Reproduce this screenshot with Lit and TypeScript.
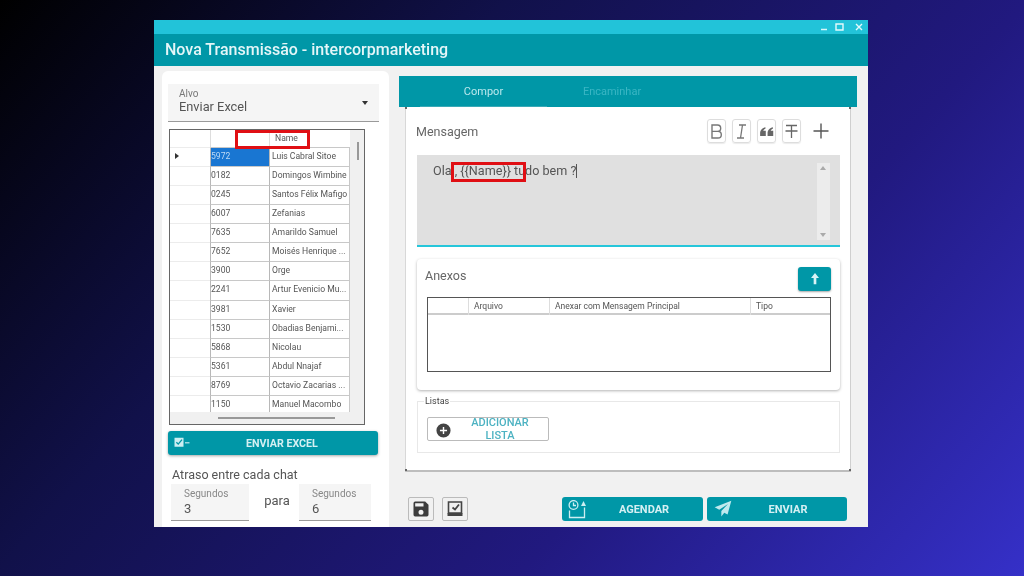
import { LitElement, html, css, svg } from 'lit';
import { customElement } from 'lit/decorators.js';

const ROWS = [
  ['5972', 'Luis Cabral Sitoe'],
  ['0182', 'Domingos Wimbine'],
  ['0245', 'Santos Félix Mafigo'],
  ['6007', 'Zefanias'],
  ['7635', 'Amarildo Samuel'],
  ['7652', 'Moisés Henrique ...'],
  ['3900', 'Orge'],
  ['2241', 'Artur Evenicio Mu...'],
  ['3981', 'Xavier'],
  ['1530', 'Obadias Benjami...'],
  ['5868', 'Nicolau'],
  ['5361', 'Abdul Nnajaf'],
  ['8769', 'Octavio Zacarias ...'],
  ['1150', 'Manuel Macombo'],
];

const icon = (size: number, color: string, body: unknown) => html`
  <svg width=${size} height=${size} viewBox="0 0 24 24" fill=${color}>${body}</svg>
`;

@customElement('app-root')
export class AppRoot extends LitElement {
  static styles = css`
    :host {
      display: block;
      width: 1024px;
      height: 576px;
      overflow: hidden;
      padding: 20px 0 0 154px;
      box-sizing: border-box;
      background: linear-gradient(131.6deg, #000 0%, #11114a 33%, #21197f 67%, #3530c8 100%);
      font-family: Roboto, 'Liberation Sans', sans-serif;
      color: #555;
    }
    .window {
      width: 714px;
      height: 507px;
      background: #f1f1f1;
      display: flex;
      flex-direction: column;
      filter: blur(0.45px);
    }
    .strip {
      height: 14px;
      background: #22c3d9;
      display: flex;
      justify-content: flex-end;
      align-items: center;
      gap: 11px;
      padding-right: 5px;
    }
    .strip .min {
      margin-right: -4px;
    }
    .title {
      height: 32px;
      background: #0097a7;
      color: #e4f6f8;
      font-size: 16px;
      font-weight: 500;
      line-height: 32px;
      padding-left: 11px;
    }
    .body {
      flex: 1;
      display: flex;
      min-height: 0;
    }

    .left {
      width: 227px;
      margin: 5px 0 0 8px;
      padding: 13px 0 0 6px;
      box-sizing: border-box;
      background: #fff;
      border-radius: 6px 6px 0 0;
    }
    .select {
      width: 211px;
      height: 38px;
      box-sizing: border-box;
      background: #f5f5f5;
      border-bottom: 1px solid #9a9a9a;
      padding: 4px 0 0 11px;
      position: relative;
    }
    .select small {
      display: block;
      font-size: 10px;
      line-height: 12px;
      color: #777;
    }
    .select span {
      display: block;
      font-size: 12.8px;
      line-height: 14px;
      color: #555;
    }
    .caret {
      position: absolute;
      right: 11px;
      top: 17px;
      border: 3.5px solid transparent;
      border-top: 4px solid #333;
      border-bottom: 0;
    }
    .grid {
      position: relative;
      width: 196px;
      height: 296px;
      margin: 7px 0 0 1px;
      box-sizing: border-box;
      border: 1.5px solid #666;
      background: #f0f0f0;
      overflow: hidden;
      font-size: 8.6px;
      color: #555;
    }
    .grid-row {
      display: grid;
      grid-template-columns: 40px 59px 81px;
      height: 19.15px;
      background: #fff;
      width: 180px;
    }
    .grid-row > div {
      box-sizing: border-box;
      line-height: 17.5px;
      white-space: nowrap;
      overflow: hidden;
      border-bottom: 1px solid #c8c8c8;
    }
    .grid-row .mark {
      border-bottom-color: #ececec;
      position: relative;
    }
    .grid-row .id {
      border-left: 1px solid #b8b8b8;
    }
    .grid-row .name {
      border-left: 1px solid #b8b8b8;
      border-right: 1px solid #c8c8c8;
      padding-left: 2px;
    }
    .grid-row.head {
      height: 17.5px;
    }
    .grid-row.head .name {
      padding-left: 5px;
      border-left-color: #ddd;
      border-right: 0;
    }
    .grid-row.head .id {
      border-left-color: #ddd;
    }
    .grid-row.selected .id {
      background: #1976d2;
      color: #bcd9f5;
    }
    .arrow {
      position: absolute;
      left: 5px;
      top: 5px;
      border: 3.5px solid transparent;
      border-left: 4px solid #333;
      border-right: 0;
    }
    .vbar {
      position: absolute;
      top: 12px;
      right: 5px;
      width: 2px;
      height: 18px;
      background: #999;
    }
    .hbar {
      position: absolute;
      left: 48px;
      bottom: 5px;
      width: 117px;
      height: 2px;
      background: #999;
    }
    .hfill {
      position: absolute;
      left: 0;
      right: 0;
      bottom: 0;
      height: 12px;
      background: #f0f0f0;
    }
    .mark-red {
      position: absolute;
      box-sizing: border-box;
      border: 3px solid #e00f14;
    }
    .grid .mark-red {
      left: 65px;
      top: 0;
      width: 75px;
      height: 19px;
    }
    .send-excel {
      width: 210px;
      height: 24px;
      margin-top: 6px;
      border-radius: 3px;
      background: #0097a7;
      box-shadow: 0 1px 3px rgba(0, 0, 0, 0.35);
      color: #d5f0f3;
      font-size: 10.7px;
      font-weight: 700;
      display: grid;
      grid-template-columns: 78px 1fr;
      align-items: center;
    }
    .send-excel svg {
      margin-left: 5px;
    }
    .delay {
      font-size: 12.5px;
      line-height: 14px;
      margin: 13px 0 0 4px;
      color: #555;
    }
    .delay-row {
      display: flex;
      margin: 2px 0 0 3px;
    }
    .num {
      height: 37px;
      box-sizing: border-box;
      background: #f5f5f5;
      border-bottom: 1px solid #9a9a9a;
      font-size: 10px;
      color: #888;
      padding: 4px 0 0 13px;
      line-height: 12px;
    }
    .num b {
      display: block;
      font-weight: 400;
      font-size: 13px;
      line-height: 17px;
      color: #555;
    }
    .num.a {
      width: 78px;
    }
    .num.b {
      width: 72px;
    }
    .para {
      width: 50px;
      box-sizing: border-box;
      text-align: center;
      font-size: 13px;
      padding: 9px 0 0 6px;
      color: #555;
    }

    .right {
      width: 458px;
      margin: 10px 0 0 10px;
      display: flex;
      flex-direction: column;
    }
    .tabs {
      height: 31px;
      flex: none;
      background: #0097a7;
      display: flex;
      padding-left: 21px;
      font-size: 11px;
      line-height: 31px;
      text-align: center;
    }
    .tab {
      width: 127px;
      box-sizing: border-box;
    }
    .tab.on {
      border-bottom: 1px solid #39a9b6;
      color: #b9e8ed;
    }
    .tab.off {
      width: 130px;
      color: #3ab6c4;
    }
    .composer {
      position: relative;
      width: 446px;
      height: 365px;
      margin-left: 6px;
      flex: none;
      box-sizing: border-box;
      background: #fff;
      border-left: 1px solid #d8d8d8;
      border-right: 1px solid #cfcfcf;
      border-bottom: 2px solid #bdbdbd;
      padding: 0 10px 0 11px;
    }
    .dot {
      position: absolute;
      width: 2px;
      height: 2px;
      background: #666;
    }
    .dot.tl {
      left: -1px;
      top: 0;
    }
    .dot.tr {
      right: -1px;
      top: 0;
    }
    .dot.bl {
      left: -1px;
      bottom: -1px;
    }
    .dot.br {
      right: -1px;
      bottom: -1px;
    }
    .compose-head {
      height: 48px;
      display: flex;
      align-items: center;
      font-size: 12.5px;
      color: #666;
    }
    .compose-head .label {
      flex: 1;
      margin: 1px 0 0 -1px;
    }
    .tool {
      width: 19px;
      height: 24px;
      margin-left: 6px;
      box-sizing: border-box;
      border: 1px solid #ddd;
      border-radius: 3px;
      box-shadow: 0 1px 1px rgba(0, 0, 0, 0.08);
      display: flex;
      align-items: center;
      justify-content: center;
    }
    .plus {
      margin: 0 11px 0 12px;
    }
    .editor {
      height: 92px;
      box-sizing: border-box;
      background: #e0e0e0;
      border-bottom: 2px solid #26c6da;
      position: relative;
      padding: 8px 0 0 16px;
      font-size: 12.6px;
      line-height: 16px;
      color: #555;
    }
    .editor i {
      display: inline-block;
      width: 1px;
      height: 14px;
      background: #555;
      vertical-align: -3px;
    }
    .editor .mark-red {
      left: 34px;
      top: 7px;
      width: 75px;
      height: 20px;
    }
    .editor-bar {
      position: absolute;
      right: 10px;
      top: 8px;
      width: 13px;
      height: 77px;
      background: #ececec;
    }
    .editor-bar::before,
    .editor-bar::after {
      content: '';
      position: absolute;
      left: 3px;
      border: 3.5px solid transparent;
    }
    .editor-bar::before {
      top: 3px;
      border-top: 0;
      border-bottom: 4px solid #aaa;
    }
    .editor-bar::after {
      bottom: 3px;
      border-bottom: 0;
      border-top: 4px solid #aaa;
    }
    .attach {
      height: 131px;
      margin-top: 12px;
      box-sizing: border-box;
      border-radius: 4px;
      background: #fff;
      box-shadow: 0 1px 3px rgba(0, 0, 0, 0.3);
      padding: 8px 9px 0 10px;
    }
    .attach-head {
      height: 30px;
      display: flex;
      justify-content: space-between;
      font-size: 12.5px;
      color: #666;
      line-height: 18px;
    }
    .attach-head span {
      margin-left: -2px;
    }
    .up {
      width: 33px;
      height: 24px;
      border-radius: 3px;
      background: #0097a7;
      box-shadow: 0 1px 2px rgba(0, 0, 0, 0.35);
      display: flex;
      align-items: center;
      justify-content: center;
    }
    .files {
      height: 75px;
      box-sizing: border-box;
      border: 1px solid #555;
      font-size: 8.5px;
      color: #555;
    }
    .files-head {
      display: grid;
      grid-template-columns: 40px 81px 201px 1fr;
      height: 17px;
      line-height: 17px;
      border-bottom: 2px solid #ccc;
      box-sizing: border-box;
    }
    .files-head div + div {
      border-left: 1px solid #ddd;
      padding-left: 5px;
    }
    .lists {
      position: relative;
      height: 52px;
      margin-top: 11px;
      box-sizing: border-box;
      border: 1px solid #e8e8e8;
      padding: 15px 0 0 9px;
    }
    .lists .legend {
      position: absolute;
      left: 6px;
      top: -6px;
      background: #fff;
      padding: 0 1px;
      font-size: 9px;
      line-height: 10px;
      color: #444;
    }
    .add {
      width: 122px;
      height: 24px;
      box-sizing: border-box;
      border: 1px solid #bbb;
      border-radius: 2px;
      display: grid;
      grid-template-columns: 43px 58px;
      grid-template-rows: 22px;
      align-items: center;
      color: #4cb2c2;
      font-size: 11px;
      font-weight: 500;
      line-height: 13px;
      text-align: center;
    }
    .add svg {
      margin: 2px 0 0 7px;
    }
    .footer {
      display: flex;
      align-items: center;
      margin: 25px 0 0 9px;
    }
    .square {
      width: 26px;
      height: 24px;
      margin-right: 8px;
      box-sizing: border-box;
      border: 1px solid #bbb;
      border-radius: 2px;
      display: flex;
      align-items: center;
      justify-content: center;
    }
    .action {
      height: 24px;
      border-radius: 3px;
      background: #0097a7;
      color: #d5f0f3;
      font-size: 11px;
      font-weight: 700;
      display: grid;
      align-items: center;
      text-align: center;
    }
    .action svg {
      margin-left: 6px;
      display: block;
    }
    .action.schedule {
      width: 141px;
      margin-left: 86px;
      grid-template-columns: 26px 112px;
    }
    .action.send {
      width: 140px;
      margin-left: 4px;
      grid-template-columns: 28px 106px;
    }
  `;

  protected render() {
    return html`
      <div class="window">
        <div class="strip">
          <svg class="min" width="8" height="8" viewBox="0 0 8 8"><path d="M1 6.500h6" stroke="#d8f6fa" stroke-width="1.500" /></svg>
          <svg width="9" height="8" viewBox="0 0 9 8"><path d="M1 1h7v6H1z" fill="none" stroke="#e4fafc" stroke-width="1.400" /></svg>
          <svg width="8" height="8" viewBox="0 0 8 8"><path d="M1 1l6 6M7 1L1 7" stroke="#e4fafc" stroke-width="1.400" /></svg>
        </div>
        <div class="title">Nova Transmissão - intercorpmarketing</div>
        <div class="body">
          ${this.renderLeft()}
          ${this.renderRight()}
        </div>
      </div>
    `;
  }

  private renderLeft() {
    return html`
      <div class="left">
        <div class="select">
          <small>Alvo</small>
          <span>Enviar Excel</span>
          <div class="caret"></div>
        </div>
        <div class="grid">
          <div class="grid-row head">
            <div class="mark"></div>
            <div class="id"></div>
            <div class="name">Name</div>
          </div>
          ${ROWS.map(
            ([id, name], i) => html`
              <div class="grid-row ${i === 0 ? 'selected' : ''}">
                <div class="mark">${i === 0 ? html`<div class="arrow"></div>` : ''}</div>
                <div class="id">${id}</div>
                <div class="name">${name}</div>
              </div>
            `,
          )}
          <div class="hfill"></div>
          <div class="vbar"></div>
          <div class="hbar"></div>
          <div class="mark-red"></div>
        </div>
        <div class="send-excel">
          ${icon(
            18,
            '#cdeef2',
            svg`<path d="M2 5h12v12H2z" /><path d="M4.500 11l2.500 2.500 5-6" fill="none" stroke="#0097a7" stroke-width="1.800" /><path d="M16 11h6v1.500h-6z" />`,
          )}
          <span>ENVIAR EXCEL</span>
        </div>
        <div class="delay">Atraso entre cada chat</div>
        <div class="delay-row">
          <div class="num a">Segundos<b>3</b></div>
          <div class="para">para</div>
          <div class="num b">Segundos<b>6</b></div>
        </div>
      </div>
    `;
  }

  private renderRight() {
    return html`
      <div class="right">
        <div class="tabs">
          <div class="tab on">Compor</div>
          <div class="tab off">Encaminhar</div>
        </div>
        <div class="composer">
          <div class="compose-head">
            <div class="label">Mensagem</div>
            <div class="tool">
              <svg width="15" height="17" viewBox="0 0 15 17" fill="none" stroke="#777" stroke-width="1.400">
                <path d="M3 2h5.500a3 3 0 0 1 0 6.400H3zM3 8.400h6a3.200 3.200 0 0 1 0 6.600H3z" />
              </svg>
            </div>
            <div class="tool">
              <svg width="15" height="17" viewBox="0 0 15 17" fill="none" stroke="#777" stroke-width="1.300">
                <path d="M5 2h7M3 15h7M8.500 2L6.500 15" />
              </svg>
            </div>
            <div class="tool">
              ${icon(
                17,
                '#666',
                svg`<path d="M10.500 6C6.500 7 3 10 3 14v4.500h8V11H7.400c.5-1.400 1.800-2.400 3.100-2.800zM21 6c-4 1-7.500 4-7.500 8v4.500h8V11h-3.600c.5-1.400 1.800-2.400 3.100-2.800z" />`,
              )}
            </div>
            <div class="tool">
              <svg width="15" height="17" viewBox="0 0 15 17" fill="none" stroke="#666" stroke-width="1.300">
                <path d="M2 2.500h11M7.500 2.500V15M1.500 8h12" />
              </svg>
            </div>
            <svg class="plus" width="16" height="16" viewBox="0 0 16 16">
              <path d="M8 0.500v15M0.500 8h15" stroke="#555" stroke-width="1.400" />
            </svg>
          </div>
          <div class="editor">
            Ola , {{Name}} tudo bem ?<i></i>
            <div class="mark-red"></div>
            <div class="editor-bar"></div>
          </div>
          <div class="attach">
            <div class="attach-head">
              <span>Anexos</span>
              <div class="up">
                ${icon(16, '#d9f3f6', svg`<path d="M12 3l6 7.500h-4V20h-4v-9.500H6z" />`)}
              </div>
            </div>
            <div class="files">
              <div class="files-head">
                <div></div>
                <div>Arquivo</div>
                <div>Anexar com Mensagem Principal</div>
                <div>Tipo</div>
              </div>
            </div>
          </div>
          <div class="lists">
            <div class="legend">Listas</div>
            <div class="add">
              ${icon(
                17,
                '#444',
                svg`<path d="M12 2a10 10 0 1 0 0 20 10 10 0 0 0 0-20zm5 11h-4v4h-2v-4H7v-2h4V7h2v4h4z" />`,
              )}
              <span>ADICIONAR<br />LISTA</span>
            </div>
          </div>
          <span class="dot tl"></span><span class="dot tr"></span>
          <span class="dot bl"></span><span class="dot br"></span>
        </div>
        <div class="footer">
          <div class="square">
            ${icon(
              20,
              '#3c3c3c',
              svg`<path d="M17 3H5a2 2 0 0 0-2 2v14a2 2 0 0 0 2 2h14a2 2 0 0 0 2-2V7zm-5 16a3 3 0 1 1 0-6 3 3 0 0 1 0 6zm3-10H5V5h10z" />`,
            )}
          </div>
          <div class="square">
            <svg width="18" height="18" viewBox="0 0 18 18" fill="none" stroke="#444" stroke-width="1.600">
              <path d="M2.500 2h13v11h-13z" />
              <path d="M1.500 14.500h15" stroke-width="3" />
              <path d="M6.500 7.500l2.500 2 4-5" stroke-width="1.800" />
            </svg>
          </div>
          <div class="action schedule">
            <svg width="19" height="19" viewBox="0 0 19 19" fill="none" stroke="#cdeef2" stroke-width="1.300">
              <circle cx="5.500" cy="5" r="4.400" />
              <path d="M5.500 2.500V5.500H8M1.500 10.500v7h15V7.500" />
              <path d="M15.500 1l2.500 5h-5z" fill="#cdeef2" stroke="none" />
            </svg>
            <span>AGENDAR</span>
          </div>
          <div class="action send">
            ${icon(20, '#bfe9ee', svg`<path d="M22 2L2 10l5.500 3L18 6l-8 8.500V21l3.500-4.500 4 2z" />`)}
            <span>ENVIAR</span>
          </div>
        </div>
      </div>
    `;
  }
}

declare global {
  interface HTMLElementTagNameMap {
    'app-root': AppRoot;
  }
}
